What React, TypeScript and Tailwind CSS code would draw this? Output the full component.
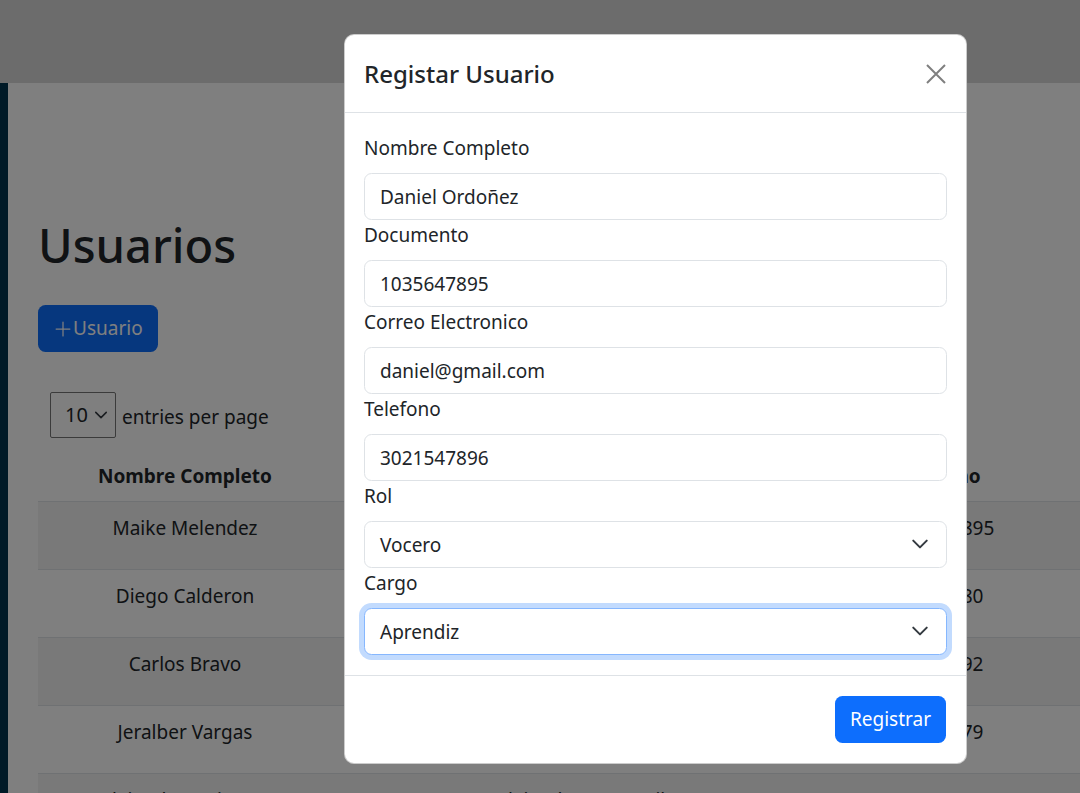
const users = [
  { name: "Maike Melendez", email: "maike@gmail.com", phone: "3104567895" },
  { name: "Diego Calderon", email: "diego@gmail.com", phone: "45789980" },
  { name: "Carlos Bravo", email: "carlos@gmail.com", phone: "32145692" },
  { name: "Jeralber Vargas", email: "jeralber@gmail.com", phone: "60478579" },
  { name: "Alejandro Quintero", email: "alejandro.q@gmail.com", phone: "3015478812" },
]

const fields = [
  { label: "Nombre Completo", value: "Daniel Ordoñez" },
  { label: "Documento", value: "1035647895" },
  { label: "Correo Electronico", value: "daniel@gmail.com" },
  { label: "Telefono", value: "3021547896" },
]

function Chevron({ className }: { className?: string }) {
  return (
    <svg viewBox="0 0 16 16" className={className} fill="none">
      <path d="m2 5 6 6 6-6" stroke="#343a40" strokeWidth="1.8" strokeLinecap="round" strokeLinejoin="round" />
    </svg>
  )
}

function SelectBox({ value, focused }: { value: string; focused?: boolean }) {
  return (
    <div
      className={`relative h-[47px] rounded-[7.5px] border bg-white px-[15px] py-[7.5px] text-[19px] leading-[30px] text-[#212529] ${
        focused ? "border-[#86b7fe] shadow-[0_0_0_5px_rgba(13,110,253,0.25)]" : "border-[#dee2e6]"
      }`}
    >
      {value}
      <Chevron className="absolute right-[17px] top-[13px] h-[18px] w-[18px]" />
    </div>
  )
}

export default function App() {
  return (
    <div className="relative h-[793px] w-full overflow-hidden bg-white font-['Noto_Sans',sans-serif] text-[#212529]">
      {/* page under the modal */}
      <div className="h-[83px] bg-[#d9d9d9]" />
      <div className="flex">
        <div className="min-h-[710px] w-[8px] shrink-0 bg-[#00344f]" />
        <main className="flex-1 pl-[30px]">
          <h1 className="mt-[131px] text-[47px] font-medium leading-[62px]">Usuarios</h1>
          <button className="mt-[29px] flex h-[47px] items-center rounded-[7.5px] bg-[#0d6efd] px-[15px] text-[19px] text-white">
            <svg viewBox="0 0 16 16" className="h-[20px] w-[20px]" fill="currentColor">
              <path d="M8 2a.5.5 0 0 1 .5.5v5h5a.5.5 0 0 1 0 1h-5v5a.5.5 0 0 1-1 0v-5h-5a.5.5 0 0 1 0-1h5v-5A.5.5 0 0 1 8 2" />
            </svg>
            Usuario
          </button>

          <div className="mt-[40px] flex items-center gap-[6px] pl-[12px]">
            <div className="flex h-[46px] w-[66px] items-center justify-between rounded-[2px] border border-[#767676] pl-[14px] pr-[7px] text-[20px]">
              10
              <Chevron className="h-[14px] w-[14px]" />
            </div>
            <span className="mt-[4px] text-[19px]">entries per page</span>
          </div>

          <table className="mt-[13px] w-[1300px] table-fixed border-collapse text-center text-[19px]">
            <colgroup>
              <col className="w-[294px]" />
              <col className="w-[542px]" />
              <col className="w-[132px]" />
              <col />
            </colgroup>
            <thead>
              <tr className="border-b border-[#dee2e6]">
                <th className="h-[50px] font-bold">Nombre Completo</th>
                <th className="font-bold">Correo Electronico</th>
                <th className="font-bold">Telefono</th>
                <th className="font-bold">Acciones</th>
              </tr>
            </thead>
            <tbody>
              {users.map((u, i) => (
                <tr key={u.name} className={`border-b border-[#dee2e6] ${i % 2 === 0 ? "bg-[#f2f2f2]" : "bg-white"}`}>
                  <td className="h-[68px] pb-[14px] align-middle">{u.name}</td>
                  <td className="pb-[14px]">{u.email}</td>
                  <td className="pb-[14px]">{u.phone}</td>
                  <td />
                </tr>
              ))}
            </tbody>
          </table>
        </main>
      </div>

      {/* backdrop */}
      <div className="absolute inset-0 bg-black/50" />

      {/* modal */}
      <div className="absolute inset-0 flex items-start pl-[344px] pt-[34px]">
        <div className="w-[623px] rounded-[10px] border border-black/20 bg-white">
          <div className="flex items-center justify-between border-b border-[#dee2e6] px-[19px] py-[20px]">
            <h5 className="text-[24px] font-medium leading-[37px]">Registar Usuario</h5>
            <svg viewBox="0 0 20 20" className="mr-[1px] h-[20px] w-[20px]">
              <path d="M1 1 19 19M19 1 1 19" stroke="#000" strokeOpacity="0.5" strokeWidth="2" />
            </svg>
          </div>

          <div className="flex flex-col px-[19px] py-[20px]">
            {fields.map((f) => (
              <div key={f.label}>
                <label className="mb-[10px] block text-[19px] leading-[30px]">{f.label}</label>
                <div className="h-[47px] rounded-[7.5px] border border-[#dee2e6] px-[15px] py-[7.5px] text-[19px] leading-[30px]">
                  {f.value}
                </div>
              </div>
            ))}
            <label className="mb-[10px] block text-[19px] leading-[30px]">Rol</label>
            <SelectBox value="Vocero" />
            <label className="mb-[10px] block text-[19px] leading-[30px]">Cargo</label>
            <SelectBox value="Aprendiz" focused />
          </div>

          <div className="flex justify-end border-t border-[#dee2e6] p-[15px]">
            <button className="m-[5px] h-[47px] rounded-[7.5px] bg-[#0d6efd] px-[15px] text-[19px] text-white">
              Registrar
            </button>
          </div>
        </div>
      </div>
    </div>
  )
}
